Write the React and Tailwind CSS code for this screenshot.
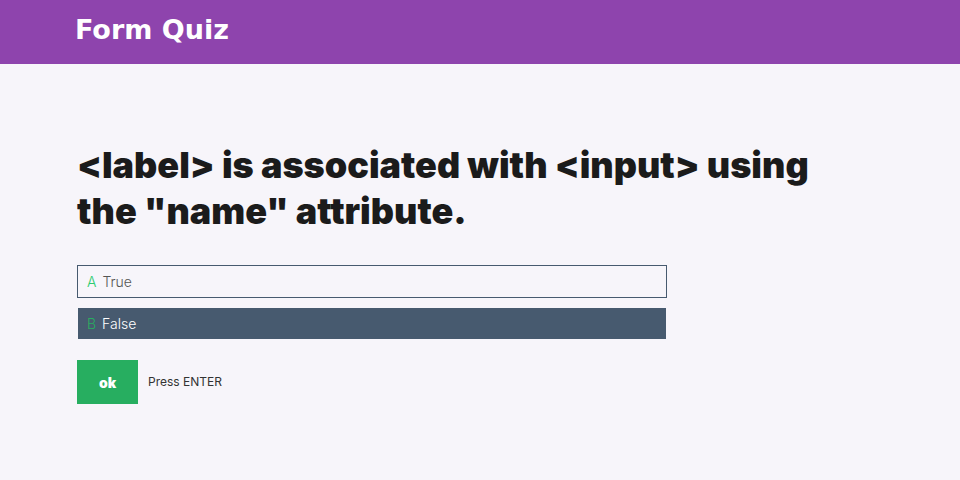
export default function App() {
  const options = [
    { key: "A", label: "True", selected: false },
    { key: "B", label: "False", selected: true },
  ];

  return (
    <div className="min-h-screen bg-[#f7f5fa]" style={{ fontFamily: "Inter, 'Noto Sans', sans-serif" }}>
      {/* Header */}
      <header className="h-16 bg-[#8e44ad] flex items-center px-[75px]">
        <h1 className="text-white text-[27px] font-bold leading-none -mt-1.5" style={{ fontFamily: "'DejaVu Sans', Verdana, sans-serif" }}>
          Form Quiz
        </h1>
      </header>

      {/* Question */}
      <main className="px-[77px] pt-[78px]">
        <h2 className="text-[#1b1b1b] text-[36px] font-black leading-[46px] max-w-[760px]">
          {"<label> is associated with <input> using the \"name\" attribute."}
        </h2>

        <div className="mt-[31px] w-[590px] flex flex-col gap-[10px]">
          {options.map((opt) =>
            opt.selected ? (
              <div key={opt.key} className="h-[31px] ml-px w-[588px] bg-[#475a6f] flex items-center px-[9px] text-[14px] font-light">
                <span className="text-[#27ae60] mr-[6px]">{opt.key}</span>
                <span className="text-white">{opt.label}</span>
              </div>
            ) : (
              <div key={opt.key} className="h-[33px] border border-[#475a6f] flex items-center px-[9px] text-[14px] font-light">
                <span className="text-[#2ecc71] mr-[6px]">{opt.key}</span>
                <span className="text-[#555]">{opt.label}</span>
              </div>
            )
          )}
        </div>

        <div className="mt-[21px] flex items-center gap-[10px]">
          <button className="w-[61px] h-[44px] bg-[#27ae60] text-white text-[14px] font-black">ok</button>
          <span className="text-[12px] text-[#333]">Press ENTER</span>
        </div>
      </main>
    </div>
  );
}
